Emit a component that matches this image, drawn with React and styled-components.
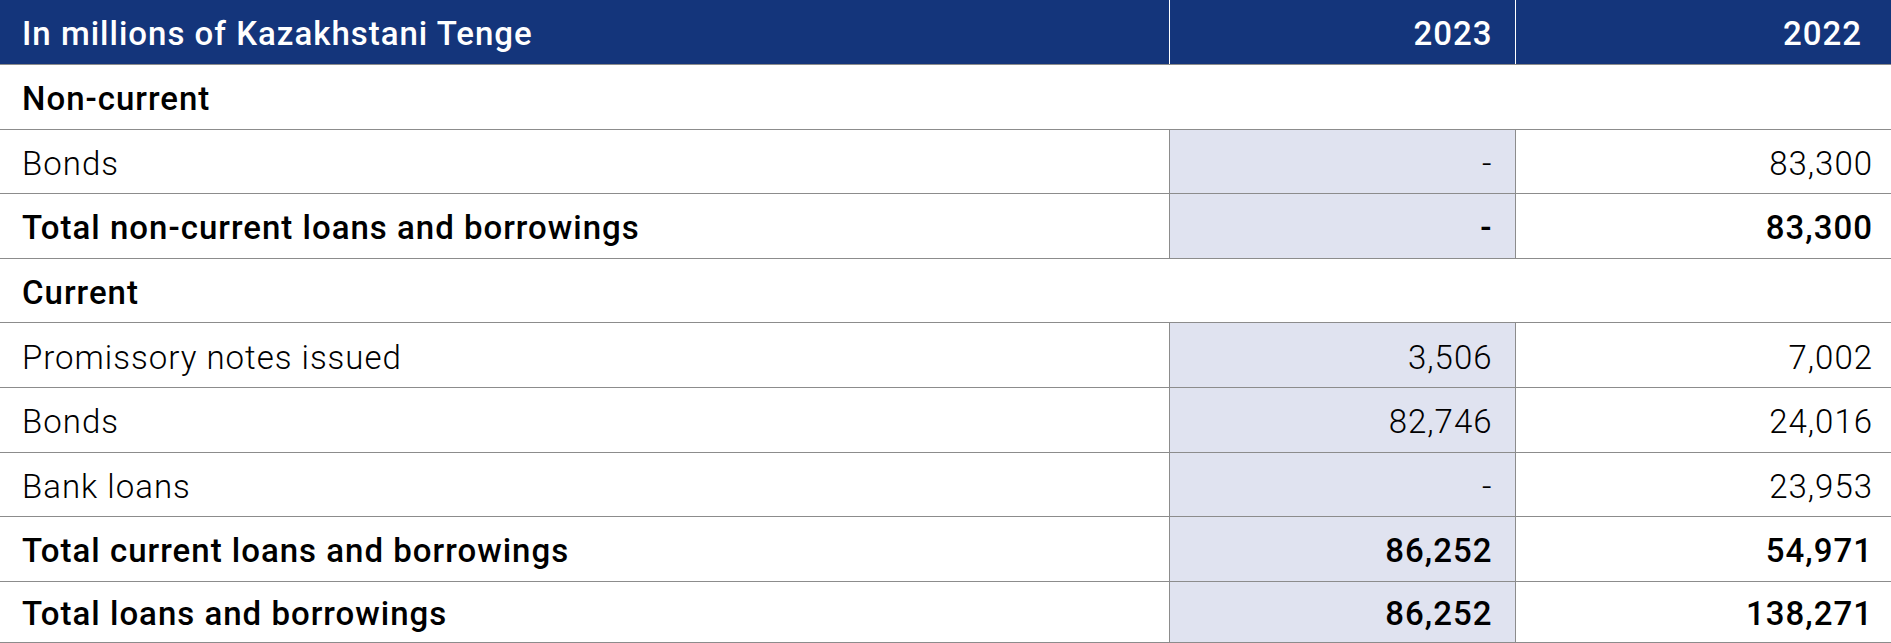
import React from "react";
import styled, { createGlobalStyle } from "styled-components";

const GlobalStyle = createGlobalStyle`
  html, body {
    margin: 0;
    padding: 0;
    background: #ffffff;
  }
  body {
    font-family: Roboto, "Liberation Sans", sans-serif;
  }
`;

const Table = styled.table`
  width: 1891px;
  border-collapse: collapse;
  table-layout: fixed;
  color: #000;
  font-size: 33px;
  letter-spacing: 1px;
`;

const HeadCell = styled.th`
  height: 62px;
  padding: 2px ${(p) => p.$padRight || 22}px 0 22px;
  background: #14357b;
  color: #fff;
  font-weight: 500;
  text-align: ${(p) => (p.$num ? "right" : "left")};
  border-left: ${(p) => (p.$num ? "1px solid #ffffff" : "none")};
  border-bottom: 1px solid #8c8c8c;
`;

const Row = styled.tr`
  height: ${(p) => (p.$last ? 61 : 64.6)}px;
  border-bottom: 1px solid #8c8c8c;
`;

const Cell = styled.td`
  padding: 4px ${(p) => p.$padRight || 22}px 0 22px;
  font-weight: ${(p) => (p.$bold ? 500 : 300)};
  text-align: ${(p) => (p.$num ? "right" : "left")};
  background: ${(p) => (p.$shade ? "#e0e3f0" : "transparent")};
  border-left: ${(p) => (p.$num ? "1px solid #8c8c8c" : "none")};
`;

const SectionCell = styled.td`
  padding: 4px 22px 0;
  font-weight: 500;
`;

const rows = [
  { type: "section", label: "Non-current" },
  { label: "Bonds", a: "-", b: "83,300" },
  { label: "Total non-current loans and borrowings", a: "-", b: "83,300", bold: true },
  { type: "section", label: "Current" },
  { label: "Promissory notes issued", a: "3,506", b: "7,002" },
  { label: "Bonds", a: "82,746", b: "24,016" },
  { label: "Bank loans", a: "-", b: "23,953" },
  { label: "Total current loans and borrowings", a: "86,252", b: "54,971", bold: true },
  { label: "Total loans and borrowings", a: "86,252", b: "138,271", bold: true },
];

export default function App() {
  return (
    <>
      <GlobalStyle />
      <Table>
        <colgroup>
          <col style={{ width: 1169 }} />
          <col style={{ width: 346 }} />
          <col style={{ width: 376 }} />
        </colgroup>
        <thead>
          <tr>
            <HeadCell>In millions of Kazakhstani Tenge</HeadCell>
            <HeadCell $num>2023</HeadCell>
            <HeadCell $num $padRight={29}>2022</HeadCell>
          </tr>
        </thead>
        <tbody>
          {rows.map((r, i) =>
            r.type === "section" ? (
              <Row key={i}>
                <SectionCell colSpan={3}>{r.label}</SectionCell>
              </Row>
            ) : (
              <Row key={i} $last={i === rows.length - 1}>
                <Cell $bold={r.bold}>{r.label}</Cell>
                <Cell $num $shade $bold={r.bold}>{r.a}</Cell>
                <Cell $num $bold={r.bold} $padRight={18}>{r.b}</Cell>
              </Row>
            )
          )}
        </tbody>
      </Table>
    </>
  );
}
